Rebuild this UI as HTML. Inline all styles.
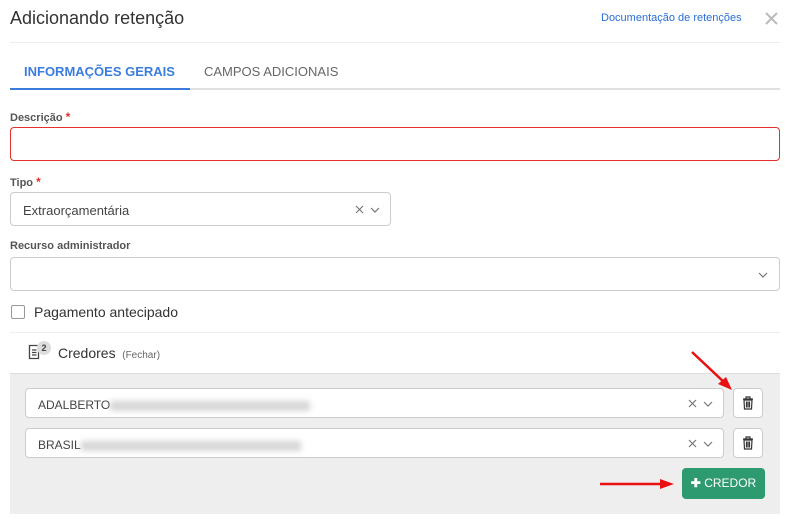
<!DOCTYPE html>
<html><head><meta charset="utf-8"><style>
*{box-sizing:border-box;margin:0;padding:0}
body{width:790px;height:520px;background:#fff;font-family:"Liberation Sans",sans-serif;color:#333;position:relative;overflow:hidden}
.abs{position:absolute}
.title{left:10px;top:8px;font-size:18px;color:#333}
.doc{left:601px;top:12px;font-size:11px;color:#2a6fd6}
.hr{left:10px;width:770px;height:1px;background:#eee}
.tab1{left:24px;top:64px;font-size:13px;font-weight:bold;color:#3b7ddd}
.tab2{left:204px;top:64px;font-size:13px;color:#666}
.label{font-size:11px;font-weight:bold;color:#555;left:10px}
.req{color:#e03030;font-size:12px}
.inp{border:1px solid #ccc;border-radius:4px;background:#fff}
.blur{display:inline-block;height:10px;background:#bbb;filter:blur(3px);vertical-align:middle;opacity:.6}
.trash{width:30px;height:30px;border:1px solid #ccc;border-radius:4px;background:#fff}
</style></head><body>
<svg width="0" height="0" style="position:absolute"><defs>
<g id="xc" stroke="#777" stroke-width="1.2" fill="none"><path d="M1 1L8 8M8 1L1 8"/><path d="M16 3L20 7L24 3"/></g>
<g id="tr" stroke="#333" stroke-width="1.2" fill="none"><path d="M1 3H11M4 3V1H8V3M2 4H10L9.5 13H2.5Z"/><path d="M4.5 5.5V11.5M6 5.5V11.5M7.5 5.5V11.5"/></g>
</defs></svg>
<div class="abs title">Adicionando retenção</div>
<div class="abs doc">Documentação de retenções</div>
<svg class="abs" style="left:765px;top:12px" width="13" height="13"><path d="M1 1L12 12M12 1L1 12" stroke="#bbb" stroke-width="2"/></svg>
<div class="abs hr" style="top:42px"></div>
<div class="abs tab1">INFORMAÇÕES GERAIS</div>
<div class="abs tab2">CAMPOS ADICIONAIS</div>
<div class="abs" style="left:10px;top:88px;width:770px;height:2px;background:#e0e0e0"></div>
<div class="abs" style="left:10px;top:88px;width:180px;height:2px;background:#3b7ddd"></div>

<div class="abs label" style="top:110px">Descrição <span class="req">*</span></div>
<div class="abs inp" style="left:10px;top:127px;width:770px;height:34px;border-color:#e03030"></div>

<div class="abs label" style="top:175px">Tipo <span class="req">*</span></div>
<div class="abs inp" style="left:10px;top:192px;width:381px;height:34px"></div>
<div class="abs" style="left:23px;top:203px;font-size:13px;color:#444">Extraorçamentária</div>
<svg class="abs" style="left:355px;top:205px" width="26" height="10"><use href="#xc"/></svg>

<div class="abs label" style="top:240px">Recurso administrador</div>
<div class="abs inp" style="left:10px;top:257px;width:770px;height:34px"></div>
<svg class="abs" style="left:744px;top:270px" width="26" height="10"><path d="M15 3L19 7L23 3" stroke="#777" stroke-width="1.2" fill="none"/></svg>

<div class="abs" style="left:11px;top:305px;width:14px;height:14px;border:1px solid #999;border-radius:2px"></div>
<div class="abs" style="left:34px;top:304px;font-size:14px;color:#333">Pagamento antecipado</div>
<div class="abs hr" style="top:332px"></div>

<svg class="abs" style="left:28px;top:344px" width="14" height="16"><path d="M1.5 1.5H10.5V14.5H1.5Z M4 6H8.5M4 8.5H8.5M4 11H8.5" stroke="#444" stroke-width="1.3" fill="none"/></svg>
<div class="abs" style="left:37px;top:341px;width:14px;height:14px;border-radius:50%;background:#ddd;font-size:9px;text-align:center;line-height:14px;font-weight:bold;color:#444">2</div>
<div class="abs" style="left:58px;top:345px;font-size:14px;color:#333">Credores <span style="font-size:10px;color:#666">&nbsp;(Fechar)</span></div>

<div class="abs" style="left:10px;top:373px;width:770px;height:141px;background:#eee;border-top:1px solid #ddd"></div>
<div class="abs inp" style="left:25px;top:388px;width:699px;height:30px"></div>
<div class="abs" style="left:38px;top:398px;font-size:12px;color:#444">ADALBERTO<span class="blur" style="width:200px"></span></div>
<svg class="abs" style="left:688px;top:399px" width="26" height="10"><use href="#xc"/></svg>
<div class="abs trash" style="left:733px;top:388px"></div>
<svg class="abs" style="left:742px;top:396px" width="12" height="14"><use href="#tr"/></svg>

<div class="abs inp" style="left:25px;top:428px;width:699px;height:30px"></div>
<div class="abs" style="left:38px;top:438px;font-size:12px;color:#444">BRASIL<span class="blur" style="width:220px"></span></div>
<svg class="abs" style="left:688px;top:439px" width="26" height="10"><use href="#xc"/></svg>
<div class="abs trash" style="left:733px;top:428px"></div>
<svg class="abs" style="left:742px;top:436px" width="12" height="14"><use href="#tr"/></svg>

<div class="abs" style="left:682px;top:468px;width:83px;height:31px;background:#2e9a70;border-radius:4px;color:#fff;font-size:12px;line-height:31px;text-align:center"><b>✚</b> CREDOR</div>

<svg class="abs" style="left:0;top:0" width="790" height="520">
<g stroke="#e81010" stroke-width="2.5" fill="#e81010">
<line x1="692" y1="352" x2="726" y2="384"/>
<polygon points="732,390 718,384 726,377" stroke="none"/>
<line x1="600" y1="484" x2="662" y2="484"/>
<polygon points="674,484 660,479 660,489" stroke="none"/>
</g></svg>
</body></html>
